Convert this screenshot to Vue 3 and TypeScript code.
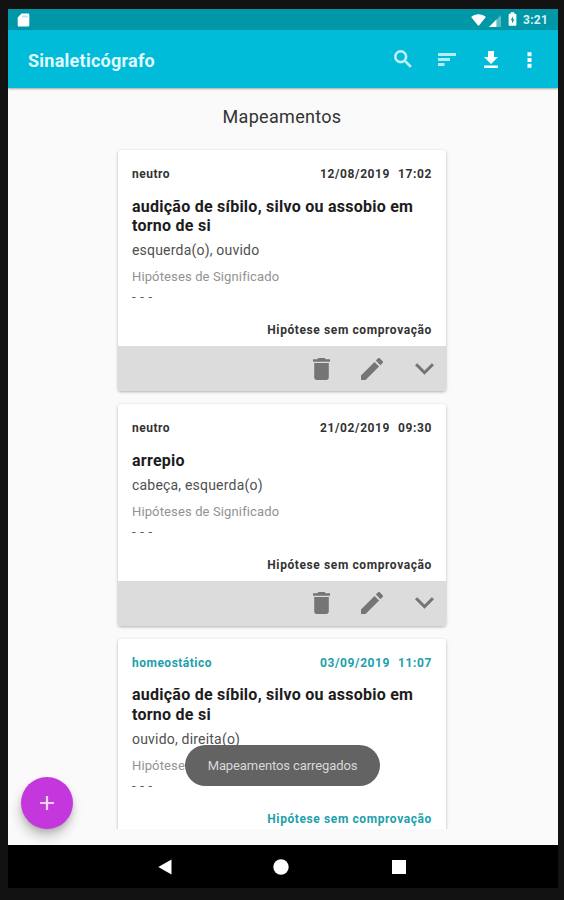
<script setup lang="ts">
interface Mapping {
  id: number
  kind: string
  date: string
  time: string
  title: string[]
  places: string
  meaning: string
  status: string
  accent: boolean
}

const mappings: Mapping[] = [
  {
    id: 1,
    kind: 'neutro',
    date: '12/08/2019',
    time: '17:02',
    title: ['audição de síbilo, silvo ou assobio em', 'torno de si'],
    places: 'esquerda(o), ouvido',
    meaning: '- - -',
    status: 'Hipótese sem comprovação',
    accent: false,
  },
  {
    id: 2,
    kind: 'neutro',
    date: '21/02/2019',
    time: '09:30',
    title: ['arrepio'],
    places: 'cabeça, esquerda(o)',
    meaning: '- - -',
    status: 'Hipótese sem comprovação',
    accent: false,
  },
  {
    id: 3,
    kind: 'homeostático',
    date: '03/09/2019',
    time: '11:07',
    title: ['audição de síbilo, silvo ou assobio em', 'torno de si'],
    places: 'ouvido, direita(o)',
    meaning: '- - -',
    status: 'Hipótese sem comprovação',
    accent: true,
  },
]
</script>

<template>
  <div class="device">
    <div class="screen">
      <div class="status-bar">
        <svg class="sd" viewBox="0 0 12 14"><path fill="#fff" d="M4 .5h6.5A1.2 1.2 0 0 1 11.800 1.700v10.600a1.200 1.200 0 0 1-1.200 1.200H1.400A1.200 1.200 0 0 1 .2 12.300V4.500z" /><path stroke="#7cc6cc" stroke-width=".9" d="M5.500 2.500v2M7.500 2.500v2M9.500 2.500v2" /></svg>
        <div class="status-icons">
          <svg class="wifi" viewBox="0 0 16 13"><path fill="#fff" d="M0 3.300C4.600-.6 11.400-.6 16 3.300L8.800 12.300a1 1 0 0 1-1.600 0z" /></svg>
          <svg class="signal" viewBox="0 0 13 13"><path fill="#5cbcc4" d="M13 0v13H0z" /><path fill="#fff" d="M8 5v8H0z" /></svg>
          <svg class="battery" viewBox="0 0 10 15"><path fill="#fff" d="M3 0h4v1.700h1.300c.6 0 1 .4 1 1v11.300c0 .6-.4 1-1 1H1.700c-.6 0-1-.4-1-1V2.700c0-.6.4-1 1-1H3z" /><path fill="#0097a7" d="M5.600 4.500 3 9h1.600v3.500L7.200 8H5.600z" /></svg>
          <span class="clock">3:21</span>
        </div>
      </div>
      <header class="app-bar">
        <h1>Sinaleticógrafo</h1>
        <nav class="actions">
          <svg class="search" viewBox="2.700 2.700 18.300 18.300"><path d="M15.500 14h-.79l-.28-.27A6.470 6.470 0 0 0 16 9.500 6.500 6.500 0 1 0 9.500 16c1.610 0 3.090-.59 4.230-1.570l.27.28v.79l5 4.990L20.490 19l-4.990-5zm-6 0C7.010 14 5 11.990 5 9.500S7.010 5 9.500 5 14 7.010 14 9.500 11.990 14 9.500 14z" /></svg>
          <svg class="sort" viewBox="0 0 18 13"><path d="M0 0h18v3H0zM0 5h12v3H0zM0 10h6.500v3H0z" /></svg>
          <svg class="download" viewBox="5 3 14 17"><path d="M19 9h-4V3H9v6H5l7 7 7-7zM5 17.500V20h14v-2.500H5z" /></svg>
          <svg class="more" viewBox="0 0 5 16"><path d="M.5.300h4v4h-4zM.5 6h4v4h-4zM.5 11.700h4v4h-4z" /></svg>
        </nav>
      </header>
      <main class="content">
        <h2>Mapeamentos</h2>
        <div class="list">
          <article v-for="item in mappings" :key="item.id" class="card" :class="{ accent: item.accent }">
            <div class="body">
              <div class="meta">
                <span class="kind">{{ item.kind }}</span>
                <span class="when"><span>{{ item.date }}</span><span>{{ item.time }}</span></span>
              </div>
              <h3><span v-for="line in item.title" :key="line">{{ line }}</span></h3>
              <p class="places">{{ item.places }}</p>
              <p class="label">Hipóteses de Significado</p>
              <p class="meaning">{{ item.meaning }}</p>
              <p class="verdict">{{ item.status }}</p>
            </div>
            <footer>
              <svg class="trash" viewBox="5 3 14 18"><path d="M6 19c0 1.100.9 2 2 2h8c1.100 0 2-.9 2-2V7H6v12zM19 4h-3.500l-1-1h-5l-1 1H5v2h14V4z" /></svg>
              <svg class="pencil" viewBox="3 3 18 18"><path d="M3 17.250V21h3.750L17.810 9.940l-3.750-3.750L3 17.250zM20.710 7.040a1 1 0 0 0 0-1.410l-2.340-2.340a1 1 0 0 0-1.410 0l-1.830 1.830 3.750 3.750 1.830-1.830z" /></svg>
              <svg class="chevron" viewBox="6 8.590 12 7.410"><path d="M7.410 8.590 12 13.170l4.590-4.580L18 10l-6 6-6-6z" /></svg>
            </footer>
          </article>
        </div>
        <button class="fab" type="button" aria-label="Adicionar">
          <svg viewBox="0 0 14 14"><path d="M5.900 0h2.200v5.900H14v2.200H8.100V14H5.900V8.100H0V5.900h5.900z" /></svg>
        </button>
        <div class="toast"><span>Mapeamentos carregados</span></div>
      </main>
      <div class="nav-bar">
        <svg class="back" viewBox="0 0 14 16"><path d="M13.500.5v15L.3 8z" /></svg>
        <svg class="home" viewBox="0 0 16 16"><circle cx="8" cy="8" r="7.700" /></svg>
        <svg class="recent" viewBox="0 0 14 14"><path d="M0 0h14v14H0z" /></svg>
      </div>
    </div>
  </div>
</template>

<style>
body {
  margin: 0;
}
</style>

<style scoped>
.device {
  box-sizing: border-box;
  width: 564px;
  height: 900px;
  padding: 9px 6px 12px 8px;
  background: #121212;
  font-family: Roboto, 'Liberation Sans', sans-serif;
  overflow: hidden;
}
.screen {
  width: 550px;
  height: 879px;
  display: flex;
  flex-direction: column;
  background: #fafafa;
}
h1, h2, h3, p {
  margin: 0;
}
svg {
  display: block;
  flex: none;
}
.status-bar {
  height: 21px;
  flex: none;
  display: flex;
  align-items: center;
  justify-content: space-between;
  padding: 0 10px 0 9px;
  background: #0097a7;
}
.sd {
  width: 13px;
  height: 14px;
}
.status-icons {
  display: flex;
  align-items: center;
}
.wifi {
  width: 15px;
  height: 12px;
}
.signal {
  width: 12px;
  height: 12px;
  margin: 2px 7px 0 3px;
}
.battery {
  width: 9px;
  height: 14px;
  margin: -2px 6px 0 0;
}
.clock {
  color: #d8f2f5;
  font-size: 12px;
  font-weight: 700;
  letter-spacing: 0.3px;
  width: 25px;
}
.app-bar {
  position: relative;
  z-index: 1;
  height: 58px;
  flex: none;
  display: flex;
  align-items: center;
  justify-content: space-between;
  padding: 0 26px 0 20px;
  box-sizing: border-box;
  background: #00bcd9;
  box-shadow: 0 1px 2px rgba(0, 0, 0, 0.35);
}
h1 {
  color: #e0faff;
  font-size: 18px;
  font-weight: 700;
  line-height: 24px;
  letter-spacing: 0.25px;
  margin-top: 3px;
}
.actions {
  display: flex;
  align-items: center;
  fill: #fff;
}
.search {
  width: 18px;
  height: 18px;
  margin-right: 26px;
  fill: #c8f2f8;
  stroke: #c8f2f8;
  stroke-width: 0.6;
}
.sort {
  width: 18px;
  height: 13px;
  margin-right: 28px;
  fill: #b5edf6;
}
.download {
  width: 14px;
  height: 17px;
  margin-right: 29px;
}
.more {
  width: 5px;
  height: 16px;
  margin-top: 1px;
}
.content {
  position: relative;
  flex: 1;
  min-height: 0;
  display: flex;
  flex-direction: column;
  align-items: center;
  padding-top: 16px;
  box-sizing: border-box;
}
h2 {
  color: #333;
  font-size: 18px;
  font-weight: 400;
  line-height: 26px;
  letter-spacing: 0.3px;
  margin-right: 2px;
}
.list {
  width: 340px;
  height: 699px;
  box-sizing: border-box;
  padding: 20px 6px 0;
  margin-right: 2px;
  display: flex;
  flex-direction: column;
  gap: 13px;
  overflow: hidden;
}
.card {
  flex: none;
  border-radius: 3px;
  background: #fff;
  box-shadow: 0 1px 3px rgba(0, 0, 0, 0.3);
  overflow: hidden;
  color: #333;
}
.body {
  padding: 15px 14px 7px;
}
.meta,
.when {
  display: flex;
  justify-content: space-between;
}
.meta {
  font-size: 12px;
  font-weight: 700;
  line-height: 18px;
}
.kind {
  letter-spacing: 0.5px;
}
.when {
  gap: 8px;
  letter-spacing: 0.6px;
}
.accent .meta,
.accent .verdict {
  color: #20a0ac;
}
h3 {
  margin-top: 13.500px;
  color: #1c1c1c;
  font-size: 16px;
  font-weight: 700;
  line-height: 19.500px;
  letter-spacing: 0.25px;
  white-space: nowrap;
}
h3 span {
  display: block;
}
.places {
  margin-top: 3.500px;
  font-size: 14px;
  line-height: 22px;
  letter-spacing: 0.2px;
  color: #505050;
}
.label {
  margin-top: 6px;
  font-size: 13px;
  line-height: 20px;
  letter-spacing: 0.13px;
  color: #929292;
}
.meaning {
  font-size: 13px;
  line-height: 20px;
  color: #555;
  letter-spacing: 0.7px;
}
.verdict {
  margin-top: 14px;
  font-size: 12px;
  font-weight: 700;
  line-height: 18px;
  letter-spacing: 0.6px;
  text-align: right;
}
footer {
  height: 45px;
  display: flex;
  align-items: center;
  justify-content: flex-end;
  padding-right: 12px;
  background: #dcdcdc;
  fill: #757575;
}
.trash {
  width: 17px;
  height: 22px;
  margin-right: 31px;
}
.pencil {
  width: 22px;
  height: 22px;
  margin-right: 32px;
}
.chevron {
  width: 19px;
  height: 12px;
}
.fab {
  position: absolute;
  left: 13px;
  bottom: 16px;
  width: 52px;
  height: 52px;
  padding: 0;
  border: 0;
  border-radius: 50%;
  display: grid;
  place-items: center;
  background: #c337dc;
  box-shadow: -1px 8px 12px rgba(0, 0, 0, 0.2), 0 3px 5px rgba(0, 0, 0, 0.12);
}
.fab svg {
  width: 14px;
  height: 14px;
  fill: #f3d5f8;
}
.toast {
  position: absolute;
  left: 177px;
  bottom: 59px;
  width: 195px;
  height: 41px;
  border-radius: 21px;
  display: grid;
  place-items: center;
  background: #636363;
  color: #d8d8d8;
  font-size: 13px;
  letter-spacing: -0.1px;
  white-space: nowrap;
}
.nav-bar {
  flex: none;
  height: 43px;
  display: flex;
  align-items: center;
  background: #000;
  fill: #fff;
  padding-left: 150px;
}
.back {
  width: 14px;
  height: 16px;
  margin-right: 101px;
}
.home {
  width: 16px;
  height: 16px;
  margin-right: 103px;
}
.recent {
  width: 14px;
  height: 14px;
}
</style>
